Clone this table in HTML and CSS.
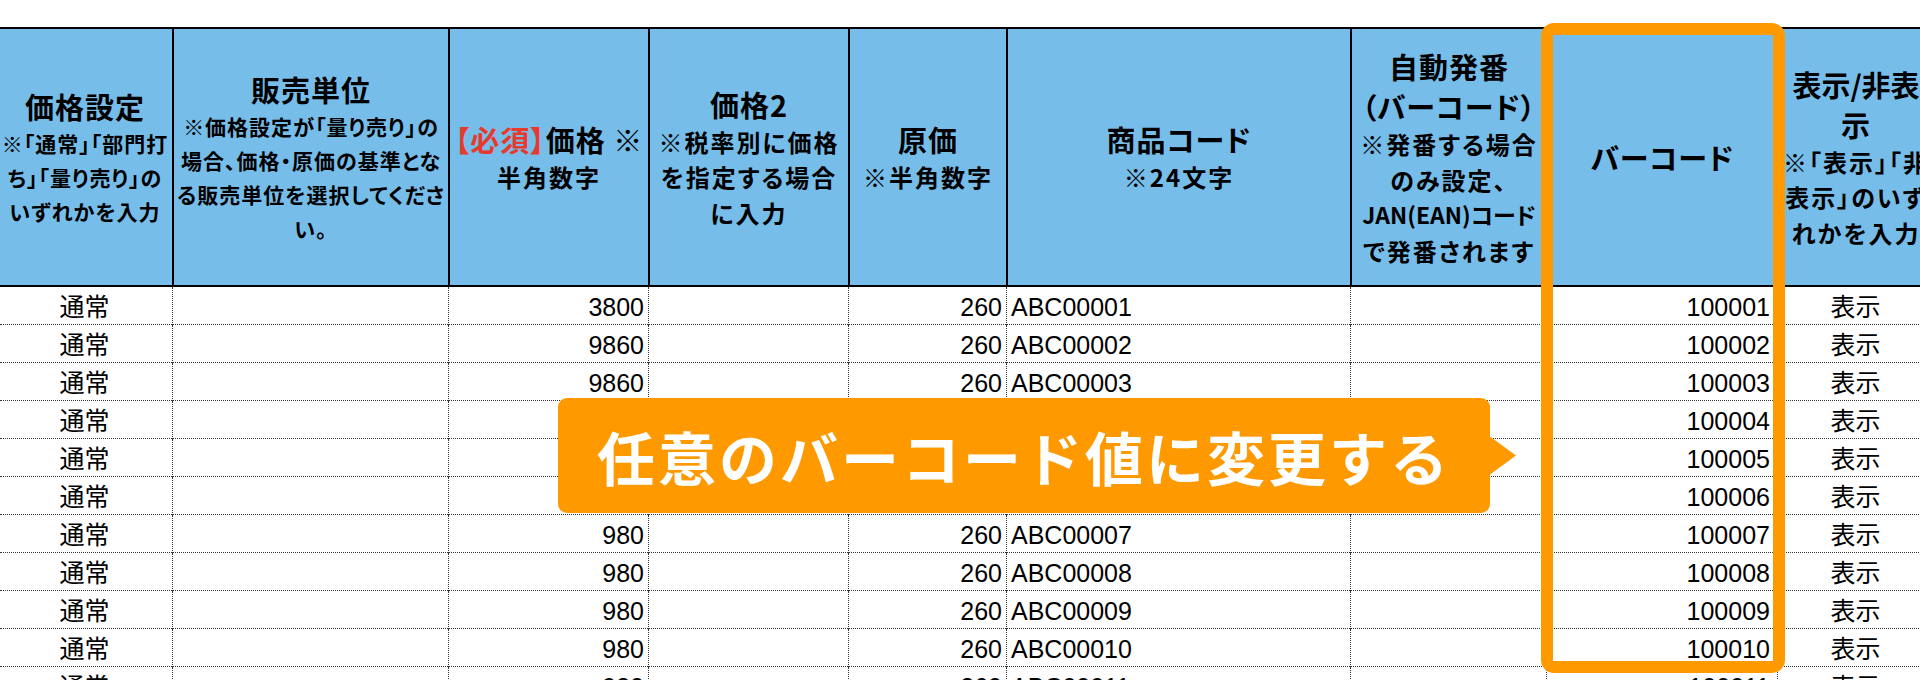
FILE: index.html
```html
<!DOCTYPE html>
<html lang="ja">
<head>
<meta charset="utf-8">
<title>商品一覧</title>
<link rel="stylesheet" href="styles.css">
</head>
<body>
<div class="page">
  <div class="sheet">
    <div class="hd first">
      <div class="t">価格設定</div>
      <div class="s sm">※「通常」「部門打</div>
      <div class="s sm">ち」「量り売り」の</div>
      <div class="s sm">いずれかを入力</div>
    </div>
    <div class="hd">
      <div class="t">販売単位</div>
      <div class="s sm">※価格設定が「量り売り」の</div>
      <div class="s sm">場合、価格・原価の基準とな</div>
      <div class="s sm">る販売単位を選択してくださ</div>
      <div class="s sm">い。</div>
    </div>
    <div class="hd">
      <div class="t"><span class="req">【必須】</span>価格 ※</div>
      <div class="s">半角数字</div>
    </div>
    <div class="hd">
      <div class="t">価格2</div>
      <div class="s">※税率別に価格</div>
      <div class="s">を指定する場合</div>
      <div class="s">に入力</div>
    </div>
    <div class="hd">
      <div class="t">原価</div>
      <div class="s">※半角数字</div>
    </div>
    <div class="hd">
      <div class="t">商品コード</div>
      <div class="s">※24文字</div>
    </div>
    <div class="hd">
      <div class="t">自動発番</div>
      <div class="t">（バーコード）</div>
      <div class="s">※発番する場合</div>
      <div class="s">のみ設定、</div>
      <div class="s lat">JAN(EAN)コード</div>
      <div class="s">で発番されます</div>
    </div>
    <div class="hd">
      <div class="t">バーコード</div>
    </div>
    <div class="hd">
      <div class="t tight">表示/非表</div>
      <div class="t">示</div>
      <div class="s">※「表示」「非</div>
      <div class="s">表示」のいず</div>
      <div class="s">れかを入力</div>
    </div>

    <div class="c first m">通常</div><div class="c"></div><div class="c r">3800</div><div class="c"></div><div class="c r">260</div><div class="c l">ABC00001</div><div class="c"></div><div class="c r bc">100001</div><div class="c m">表示</div>
    <div class="c first m">通常</div><div class="c"></div><div class="c r">9860</div><div class="c"></div><div class="c r">260</div><div class="c l">ABC00002</div><div class="c"></div><div class="c r bc">100002</div><div class="c m">表示</div>
    <div class="c first m">通常</div><div class="c"></div><div class="c r">9860</div><div class="c"></div><div class="c r">260</div><div class="c l">ABC00003</div><div class="c"></div><div class="c r bc">100003</div><div class="c m">表示</div>
    <div class="c first m">通常</div><div class="c"></div><div class="c r">9860</div><div class="c"></div><div class="c r">260</div><div class="c l">ABC00004</div><div class="c"></div><div class="c r bc">100004</div><div class="c m">表示</div>
    <div class="c first m">通常</div><div class="c"></div><div class="c r">980</div><div class="c"></div><div class="c r">260</div><div class="c l">ABC00005</div><div class="c"></div><div class="c r bc">100005</div><div class="c m">表示</div>
    <div class="c first m">通常</div><div class="c"></div><div class="c r">980</div><div class="c"></div><div class="c r">260</div><div class="c l">ABC00006</div><div class="c"></div><div class="c r bc">100006</div><div class="c m">表示</div>
    <div class="c first m">通常</div><div class="c"></div><div class="c r">980</div><div class="c"></div><div class="c r">260</div><div class="c l">ABC00007</div><div class="c"></div><div class="c r bc">100007</div><div class="c m">表示</div>
    <div class="c first m">通常</div><div class="c"></div><div class="c r">980</div><div class="c"></div><div class="c r">260</div><div class="c l">ABC00008</div><div class="c"></div><div class="c r bc">100008</div><div class="c m">表示</div>
    <div class="c first m">通常</div><div class="c"></div><div class="c r">980</div><div class="c"></div><div class="c r">260</div><div class="c l">ABC00009</div><div class="c"></div><div class="c r bc">100009</div><div class="c m">表示</div>
    <div class="c first m">通常</div><div class="c"></div><div class="c r">980</div><div class="c"></div><div class="c r">260</div><div class="c l">ABC00010</div><div class="c"></div><div class="c r bc">100010</div><div class="c m">表示</div>
    <div class="c first m">通常</div><div class="c"></div><div class="c r">980</div><div class="c"></div><div class="c r">260</div><div class="c l">ABC00011</div><div class="c"></div><div class="c r bc">100011</div><div class="c m">表示</div>
  </div>

  <div class="frame"></div>
  <div class="callout">任意のバーコード値に変更する</div>
</div>
</body>
</html>
```

FILE: styles.css
```css
html, body {
  margin: 0;
  padding: 0;
  background: #ffffff;
  overflow: hidden;
}

.page {
  position: relative;
  width: 1920px;
  height: 680px;
  overflow: hidden;
}

.sheet {
  display: grid;
  grid-template-columns: 172px 276px 200px 200px 158px 344px 196px 231px 156px;
  width: 1933px;
  margin-top: 27px;
}

/* header cells */
.hd {
  box-sizing: border-box;
  height: 260px;
  background: #76bdea;
  border-top: 2px solid #000;
  border-bottom: 2px solid #000;
  border-left: 2px solid #000;
  display: flex;
  flex-direction: column;
  align-items: center;
  justify-content: center;
  font-family: "Noto Sans CJK JP", sans-serif;
  font-weight: 700;
  color: #000;
  white-space: nowrap;
  font-feature-settings: "palt";
}

.hd.first {
  border-left: 0;
  padding-right: 2px;
}

.t {
  font-size: 29px;
  line-height: 40px;
  letter-spacing: 1px;
}

.t.tight {
  letter-spacing: 0;
}

.s {
  font-size: 24px;
  line-height: 35.5px;
  letter-spacing: 2px;
}

.s.lat {
  letter-spacing: 0;
  font-size: 23px;
}

.s.sm {
  font-size: 21px;
  line-height: 34px;
  letter-spacing: 1px;
}

.req {
  color: #e63a2e;
}

/* data cells */
.c {
  box-sizing: border-box;
  height: 38px;
  padding: 3px 4px 0 4px;
  border-left: 1px dotted #333;
  border-bottom: 1px dotted #333;
  font-family: "Liberation Sans", "Noto Sans CJK JP", sans-serif;
  font-size: 25px;
  line-height: 34px;
  color: #000;
  white-space: nowrap;
  overflow: hidden;
}

.c.first {
  border-left: 0;
  padding-right: 7px;
}

.r { text-align: right; }
.l { text-align: left; }
.m { text-align: center; }
.bc { padding-right: 7px; }

/* annotations */
.frame {
  position: absolute;
  left: 1541px;
  top: 23px;
  width: 244px;
  height: 650px;
  box-sizing: border-box;
  border: 12px solid #ff9900;
  border-radius: 13px;
}

.callout {
  position: absolute;
  left: 558px;
  top: 398px;
  width: 932px;
  height: 115px;
  background: #ff9900;
  border-radius: 9px;
  display: flex;
  align-items: center;
  justify-content: center;
  color: #ffffff;
  font-family: "Noto Sans CJK JP", sans-serif;
  font-weight: 700;
  font-size: 58px;
  line-height: 1;
  letter-spacing: 3px;
  white-space: nowrap;
}

.callout::after {
  content: "";
  position: absolute;
  left: 100%;
  top: 50%;
  margin-top: -19px;
  width: 26px;
  height: 38px;
  background: #ff9900;
  clip-path: polygon(0 0, 100% 50%, 0 100%);
}
```
